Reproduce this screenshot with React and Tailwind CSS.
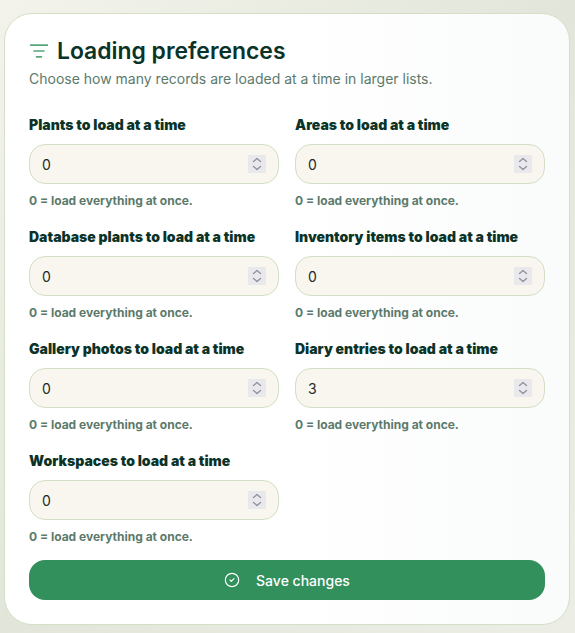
import React from 'react';
import { ListFilter, CircleCheck } from 'lucide-react';

const fields = [
  { label: 'Plants to load at a time', value: '0' },
  { label: 'Areas to load at a time', value: '0' },
  { label: 'Database plants to load at a time', value: '0' },
  { label: 'Inventory items to load at a time', value: '0' },
  { label: 'Gallery photos to load at a time', value: '0' },
  { label: 'Diary entries to load at a time', value: '3' },
  { label: 'Workspaces to load at a time', value: '0' },
];

const Spinner = () => (
  <div className="w-[18px] h-[18px] bg-[#e9e9ed] flex items-center justify-center">
    <svg width="12" height="16" viewBox="0 0 12 16" fill="none" stroke="#93939f" strokeWidth="1.4" strokeLinecap="round" strokeLinejoin="round">
      <path d="M2.5 5.5 6 2.5l3.5 3" />
      <path d="M2.5 10.5 6 13.5l3.5-3" />
    </svg>
  </div>
);

const Field = ({ label, value }) => (
  <div className="flex flex-col">
    <div className="text-[14px] leading-[20px] font-black text-[#0b3328]">{label}</div>
    <div className="mt-[9px] h-[40px] rounded-[16px] border border-[#d3dfc6] bg-[#f9f6ef] flex items-center justify-between pl-[12px] pr-[12px]">
      <span className="text-[14px] text-[#1d2b26]">{value}</span>
      <Spinner />
    </div>
    <div className="mt-[9px] text-[12px] leading-[16px] font-bold text-[#5b7a6c]">0 = load everything at once.</div>
  </div>
);

export default function App() {
  return (
    <div className="min-h-screen h-[633px] overflow-hidden bg-gradient-to-br from-[#f3f3eb] via-[#e2e6da] to-[#eceee5] pt-[13px] pl-[4px] pr-[5px] font-['Inter',sans-serif]">
      <div className="w-[566px] h-[612px] rounded-[28px] border border-[#d3dfc6] bg-gradient-to-r from-white via-white to-[#fafbfb] px-[24px] pt-[20px]">
        <div className="flex items-center gap-[8px] h-[34px]">
          <ListFilter size={20} strokeWidth={2} className="text-[#55a67a]" />
          <h2 className="text-[22.9px] leading-[34px] font-semibold text-[#0b3328]">Loading preferences</h2>
        </div>
        <p className="mt-[1px] text-[14px] leading-[20px] text-[#5b7a6c]">
          Choose how many records are loaded at a time in larger lists.
        </p>
        <div className="mt-[26px] grid grid-cols-[250px_250px] gap-x-[16px] gap-y-[18px]">
          {fields.map((f) => (
            <Field key={f.label} label={f.label} value={f.value} />
          ))}
        </div>
        <button className="mt-[15px] w-[516px] h-[40px] rounded-[16px] bg-[#31905c] text-white text-[14px] font-medium flex items-center justify-center gap-[16px]">
          <CircleCheck size={16} strokeWidth={1.75} />
          <span>Save changes</span>
        </button>
      </div>
    </div>
  );
}
